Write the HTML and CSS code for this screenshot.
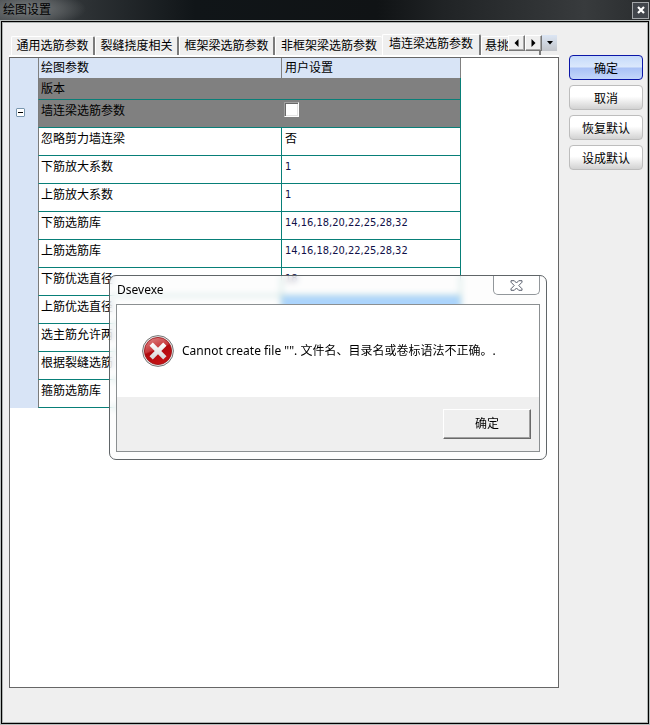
FILE: index.html
```html
<!DOCTYPE html>
<html lang="zh-CN">
<head>
<meta charset="utf-8">
<title>绘图设置</title>
<link rel="stylesheet" href="styles.css">
</head>
<body>
<div class="window">
  <header class="titlebar">
    <h1>绘图设置</h1>
    <button class="win-close" aria-label="关闭"><svg width="8" height="8" viewBox="0 0 8 8"><path d="M1 1L7 7M7 1L1 7" stroke="#fff" stroke-width="2.2"/></svg></button>
  </header>
  <main class="client">
    <section class="settings">
      <div class="tabbar">
        <div class="tabs" role="tablist">
          <button class="tab" role="tab">通用选筋参数</button>
          <button class="tab" role="tab">裂缝挠度相关</button>
          <button class="tab wide" role="tab">框架梁选筋参数</button>
          <button class="tab wider" role="tab">非框架梁选筋参数</button>
          <button class="tab active" role="tab" aria-selected="true">墙连梁选筋参数</button>
          <button class="tab last" role="tab">悬挑梁</button>
        </div>
        <div class="scrollers">
          <button class="arrow" aria-label="向左"><svg width="5" height="8" viewBox="0 0 5 8"><path d="M4.500 0V8L.5 4Z"/></svg></button>
          <button class="arrow" aria-label="向右"><svg width="5" height="8" viewBox="0 0 5 8"><path d="M.5 0V8L4.500 4Z"/></svg></button>
          <button class="arrow drop" aria-label="列表"><svg width="6" height="4" viewBox="0 0 6 4"><path d="M0 0H6L3 3.500Z"/></svg></button>
        </div>
      </div>
      <div class="panel">
        <table class="grid">
          <tbody>
            <tr class="head"><td class="gutter" rowspan="13"><button class="toggle" aria-label="折叠"><svg width="9" height="9" viewBox="0 0 9 9"><path d="M2 4.500H7" stroke="#000"/></svg></button></td><th>绘图参数</th><th>用户设置</th></tr>
            <tr class="group version"><td colspan="2">版本</td></tr>
            <tr class="group"><td><label for="wall">墙连梁选筋参数</label></td><td class="check"><input id="wall" type="checkbox"></td></tr>
            <tr><td>忽略剪力墙连梁</td><td>否</td></tr>
            <tr><td>下筋放大系数</td><td class="num">1</td></tr>
            <tr><td>上筋放大系数</td><td class="num">1</td></tr>
            <tr><td>下筋选筋库</td><td class="num">14,16,18,20,22,25,28,32</td></tr>
            <tr><td>上筋选筋库</td><td class="num">14,16,18,20,22,25,28,32</td></tr>
            <tr><td>下筋优选直径</td><td class="num">18</td></tr>
            <tr><td>上筋优选直径</td><td class="num selected"></td></tr>
            <tr><td>选主筋允许两</td><td></td></tr>
            <tr><td>根据裂缝选筋</td><td></td></tr>
            <tr><td>箍筋选筋库</td><td></td></tr>
          </tbody>
        </table>
      </div>
    </section>
    <aside class="actions">
      <button class="action primary">确定</button>
      <button class="action">取消</button>
      <button class="action">恢复默认</button>
      <button class="action">设成默认</button>
    </aside>
  </main>
</div>
<div class="dialog" role="alertdialog" aria-labelledby="dialog-title" aria-describedby="dialog-text">
  <header class="dialog-head">
    <h2 id="dialog-title">Dsevexe</h2>
    <button class="dialog-close" aria-label="关闭"><svg width="13" height="11" viewBox="0 0 13 11"><path d="M1 .7H4.300L6.500 3L8.700.7H12V2.200L8.800 5.500L12 8.800V10.300H8.700L6.500 8L4.300 10.300H1V8.800L4.200 5.500L1 2.200Z" fill="#fff" stroke="#5b606e" stroke-width="1"/></svg></button>
  </header>
  <div class="dialog-body">
    <div class="message">
      <svg class="error" width="32" height="32" viewBox="0 0 32 32">
        <defs>
          <linearGradient id="red" x1="0" y1="0" x2=".4" y2="1"><stop offset="0" stop-color="#e08b8b"/><stop offset=".5" stop-color="#c83a3c"/><stop offset=".56" stop-color="#b00a0e"/><stop offset="1" stop-color="#c41214"/></linearGradient>
          <linearGradient id="cross" x1="0" y1="0" x2="0" y2="1"><stop offset="0" stop-color="#fff"/><stop offset="1" stop-color="#d6d6d6"/></linearGradient>
        </defs>
        <circle cx="16" cy="16" r="15.400" fill="#e9e9e9" stroke="#777" stroke-width="1"/>
        <circle cx="16" cy="16" r="13.600" fill="url(#red)" stroke="#981014" stroke-width=".8"/>
        <path d="M10.800 7.500L16 12.700L21.200 7.500L24.500 10.800L19.300 16L24.500 21.200L21.200 24.500L16 19.300L10.800 24.500L7.500 21.200L12.700 16L7.500 10.800Z" fill="url(#cross)"/>
      </svg>
      <p id="dialog-text">Cannot create file "". 文件名、目录名或卷标语法不正确。.</p>
    </div>
    <footer class="dialog-foot"><button class="ok">确定</button></footer>
  </div>
</div>
</body>
</html>
```
FILE: styles.css
```css
* { box-sizing: border-box; }
body {
  margin: 0;
  color: #000;
  font: 12px/16px "Liberation Sans", "Noto Sans CJK SC", sans-serif;
}
button { padding: 0; color: inherit; font: inherit; white-space: nowrap; }
svg { display: block; }
h1, h2, p { margin: 0; font: inherit; }

.window { min-height: 100vh; display: flex; flex-direction: column; background: #b8bdbc; }
.titlebar {
  height: 20px;
  padding: 0 1px 0 3px;
  display: flex;
  align-items: center;
  justify-content: space-between;
  background:
    radial-gradient(ellipse 58px 18px at 28px 9px, #787c7e, #65696b99 60%, transparent),
    linear-gradient(90deg, #44484b, #101518 30%, #101315 58%, #202325 68%, #383b3d 90%, #292c2e);
}
.win-close {
  width: 17px;
  height: 17px;
  display: grid;
  place-items: center;
  border: 1px solid #a2a5a8;
  background: #42464c;
}
.client {
  flex: 1;
  margin: 1px;
  padding: 12px 5px 35px 7px;
  display: flex;
  gap: 10px;
  border: 1px solid #000;
  box-shadow: inset 0 0 0 1px #aeb3b2;
  background: #efefef;
}
.settings { flex: 1; min-width: 0; display: flex; flex-direction: column; }
.tabbar { height: 23px; padding: 0 2px; display: flex; position: relative; border-bottom: 2px solid #fff; }
.tabs { flex: 1; min-width: 0; display: flex; align-items: flex-end; overflow: hidden; }
.tab {
  flex: none;
  width: 84px;
  height: 19px;
  border: 0;
  border-top: 1px solid #fff;
  border-left: 1px solid #fff;
  border-right: 2px solid #7b7b7b;
  border-radius: 2px 2px 0 0;
  background: #efefef;
}
.wide { width: 96px; }
.wider { width: 107px; border-right: 0; }
.active { width: 99px; height: 21px; padding-bottom: 2px; }
.last { width: 60px; padding-left: 3px; text-align: left; }
.scrollers { position: absolute; right: 2px; top: 1px; display: flex; }
.arrow {
  width: 17px;
  height: 16px;
  display: grid;
  place-items: center;
  border: 1px solid;
  border-color: #fff #777 #777 #fff;
  background: #efefef;
  box-shadow: inset -1px -1px #aaa;
}
.drop { width: 15px; border: 0; box-shadow: none; background: linear-gradient(#dce6f4, #c2c5ca); }
.panel { flex: 1; border: 1px solid #666; background: #fff; }

.grid { width: 451px; border-spacing: 0; table-layout: fixed; }
.grid th, .grid td { height: 28px; padding: 3px 3px 2px; text-align: left; vertical-align: top; font-weight: 400; }
.grid .gutter + th { width: 244px; }
.grid tr:not(.head) td { border-right: 1px solid #087f78; border-bottom: 1px solid #087f78; }
.grid tr:not(.head) td:first-child { border-left: 1px solid #7b7b7b; padding-left: 2px; }
.grid .head th { height: 20px; padding: 2px 3px 1px; border-right: 1px solid #808080; background: #d8e4f6; }
.grid .head .gutter + th { padding-left: 2px; border-left: 1px solid #808080; }
.grid .gutter { width: 28px; padding: 50px 6px; background: #d8e4f6; }
.grid .group td { background: #808080; }
.grid .group td:first-child:not([colspan]) { border-right: 0; }
.grid .version td { height: 22px; }
.grid .check { padding: 2px; }
.grid .num { color: #101048; font: 11px/16px "DejaVu Sans Condensed", "DejaVu Sans", sans-serif; }
.grid .selected { background: #3399ff; }
.toggle { width: 9px; height: 9px; display: block; border: 0; outline: 1px solid #7895ae; outline-offset: -1px; border-radius: 1px; background: #fff; }
.grid input {
  appearance: none;
  width: 15px;
  height: 15px;
  margin: 0;
  display: block;
  border: 1px solid;
  border-color: #a0a0a0 #fff #fff #a0a0a0;
  box-shadow: inset 1px 1px #696969, inset -1px -1px #e3e3e3;
  background: #fff;
}

.actions { width: 74px; padding-top: 21px; display: flex; flex-direction: column; gap: 5px; }
.action {
  height: 25px;
  padding-top: 2px;
  border: 1px solid #bdbdbd;
  border-radius: 4px;
  background: linear-gradient(#fff 45%, #d2d2d2);
}
.primary {
  border-color: #0b16a8;
  background: linear-gradient(#c5dafa, #dbe8fc 48%, #a9c1f6 52%, #c3d6fa);
}

.dialog {
  position: absolute;
  left: 109px;
  top: 275px;
  width: 438px;
  padding: 0 6px 7px;
  border: 1px solid #606568;
  border-radius: 7px;
  background: rgba(252, 252, 252, 0.6);
  backdrop-filter: blur(3px);
}
.dialog-head { height: 28px; display: flex; justify-content: space-between; }
.dialog-head h2 { padding: 6px 1px; font-family: "Noto Sans", sans-serif; }
.dialog-close {
  width: 47px;
  height: 19px;
  display: grid;
  place-items: center;
  border: 1px solid #92979b;
  border-top: 0;
  border-radius: 0 0 5px 5px;
  background: #fff;
}
.dialog-body { border: 1px solid #8b8f91; background: #efefef; }
.message { height: 92px; padding: 0 25px; display: flex; align-items: center; gap: 8px; background: #fff; }
.message p { font-family: "Noto Sans", "Noto Sans CJK SC", sans-serif; white-space: nowrap; }
.dialog-foot { padding: 12px 8px; display: flex; justify-content: flex-end; }
.ok {
  width: 88px;
  height: 30px;
  border: 1px solid;
  border-color: #fff #696969 #696969 #fff;
  background: #efefef;
  box-shadow: inset -1px -1px #a0a0a0;
}
```
